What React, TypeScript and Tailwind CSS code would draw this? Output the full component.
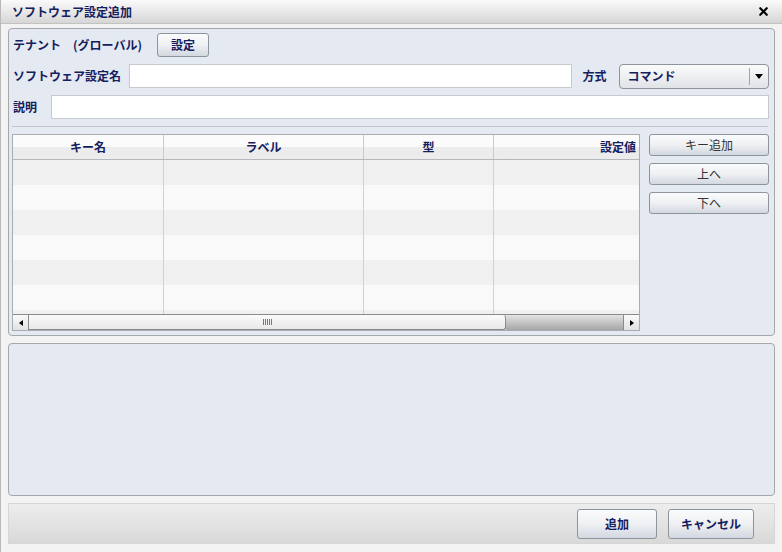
import { X } from "lucide-react";

const font = "font-['Noto_Sans_CJK_JP','Liberation_Sans',sans-serif]";

const cols = [
  { label: "キー名", w: "w-[151px]" },
  { label: "ラベル", w: "w-[200px]" },
  { label: "型", w: "w-[130px]" },
  { label: "設定値", w: "w-[248px]" },
];

function Btn({ children, className = "", bold = true }: { children: React.ReactNode; className?: string; bold?: boolean }) {
  return (
    <button
      className={`flex items-center justify-center rounded-[3px] border border-[#8e949c] bg-gradient-to-b from-[#fafbfc] via-[#eef0f3] to-[#d3d8e0] text-[12px] leading-none ${bold ? "font-bold text-[#14205e]" : "text-[#333]"} ${className}`}
    >
      {children}
    </button>
  );
}

function Grid() {
  return (
    <div className="w-[629px] h-[197px] border border-[#a9adb2] bg-white flex flex-col overflow-hidden">
      <div className="flex-1 overflow-hidden">
        <div className="w-[729px]">
          <div className="flex h-[25px] border-b border-[#b4b8bc] bg-gradient-to-b from-[#fbfbfb] from-50% to-[#ececec] to-50%">
            {cols.map((c, i) => (
              <div
                key={c.label}
                className={`${c.w} shrink-0 flex items-center justify-center text-[12px] font-bold text-[#14205e] ${i < 3 ? "border-r border-[#c8cbce]" : ""}`}
              >
                {c.label}
              </div>
            ))}
          </div>
          {[0, 1, 2, 3, 4, 5, 6].map((r) => (
            <div key={r} className={`flex h-[25px] ${r % 2 === 0 ? "bg-[#f0f0f0]" : "bg-[#f9f9f9]"}`}>
              {cols.map((c, i) => (
                <div key={c.label} className={`${c.w} shrink-0 ${i < 3 ? "border-r border-[#cfd1d3]" : ""}`} />
              ))}
            </div>
          ))}
        </div>
      </div>
      <div className="h-[16px] flex border-t border-[#8a8a8a] bg-[#dcdcdc]">
        <div className="w-[16px] h-full flex items-center justify-center border-r border-[#8a8a8a] bg-gradient-to-b from-[#fafafa] to-[#e2e2e2]">
          <div className="w-0 h-0 border-y-[3px] border-y-transparent border-r-[4px] border-r-black" />
        </div>
        <div className="w-[477px] h-full flex items-center justify-center rounded-r-[3px] border-r border-b border-[#8a8a8a] bg-gradient-to-b from-[#fbfbfb] to-[#e8e8e8]">
          <div className="flex gap-[1px]">
            {[0, 1, 2, 3, 4].map((g) => (
              <div key={g} className="w-[1px] h-[6px] bg-[#777]" />
            ))}
          </div>
        </div>
        <div className="flex-1 h-full bg-gradient-to-b from-[#e4e4e4] via-[#c4c4c4] to-[#a6a6a6]" />
        <div className="w-[16px] h-full flex items-center justify-center border-l border-[#8a8a8a] bg-gradient-to-b from-[#fafafa] to-[#e2e2e2]">
          <div className="w-0 h-0 border-y-[3px] border-y-transparent border-l-[4px] border-l-black" />
        </div>
      </div>
    </div>
  );
}

export default function App() {
  return (
    <div className={`w-[782px] h-[552px] bg-[#f3f3f3] border-l border-[#b9b9b9] flex flex-col ${font}`}>
      <div className="h-[24px] shrink-0 flex items-center justify-between pl-[11px] pr-[12px] border-b border-[#c2c2c2] bg-gradient-to-b from-[#fafafa] to-[#d6d6d6]">
        <span className="text-[12px] font-bold text-[#14205e]">ソフトウェア設定追加</span>
        <X size={13} strokeWidth={4} className="text-black" />
      </div>

      <div className="flex-1 flex flex-col px-[7px] pt-[4px] gap-[7px]">
        <section className="h-[308px] shrink-0 rounded-[4px] border border-[#a4a8ad] bg-[#e5eaf2] pl-[4px] pr-[5px] pt-[4px] flex flex-col gap-[7px]">
          <div className="h-[24px] flex items-center">
            <span className="text-[12px] font-bold text-[#14205e] w-[144px]">テナント　(グローバル)</span>
            <Btn className="w-[52px] h-[24px]">設定</Btn>
          </div>
          <div className="h-[24px] flex items-center">
            <span className="text-[12px] font-bold text-[#14205e] w-[116px]">ソフトウェア設定名</span>
            <div className="w-[444px] h-[24px] border border-[#c6c9cd] bg-white" />
            <span className="ml-[11px] w-[37px] text-[12px] font-bold text-[#14205e]">方式</span>
            <div className="w-[150px] h-[25px] rounded-[4px] border border-[#8e949c] bg-gradient-to-b from-[#fbfbfb] to-[#e0e3e7] flex items-center">
              <span className="flex-1 pl-[7px] text-[12px] font-bold text-[#14205e]">コマンド</span>
              <div className="w-[19px] h-[17px] border-l border-[#a0a4a8] flex items-center justify-center">
                <div className="w-0 h-0 border-x-[4px] border-x-transparent border-t-[5px] border-t-black" />
              </div>
            </div>
          </div>
          <div className="h-[24px] flex items-center">
            <span className="text-[12px] font-bold text-[#14205e] w-[38px]">説明</span>
            <div className="flex-1 h-[24px] border border-[#c6c9cd] bg-white" />
          </div>
          <div className="h-[1px] -ml-[1px] mr-[1px] bg-[#c3c6ca]" />
          <div className="flex -ml-[1px] gap-[9px]">
            <Grid />
            <div className="flex flex-col gap-[7px]">
              <Btn bold={false} className="w-[120px] h-[22px]">キー追加</Btn>
              <Btn bold={false} className="w-[120px] h-[22px]">上へ</Btn>
              <Btn bold={false} className="w-[120px] h-[22px]">下へ</Btn>
            </div>
          </div>
        </section>

        <section className="h-[153px] shrink-0 rounded-[4px] border border-[#a4a8ad] bg-[#e5eaf2]" />

        <footer className="h-[41px] shrink-0 border border-[#d6d6d6] bg-gradient-to-b from-[#ededed] via-[#e3e3e3] to-[#d8d8d8] flex items-center justify-end gap-[11px] pr-[20px]">
          <Btn className="w-[80px] h-[30px]">追加</Btn>
          <Btn className="w-[86px] h-[30px]">キャンセル</Btn>
        </footer>
      </div>
    </div>
  );
}
